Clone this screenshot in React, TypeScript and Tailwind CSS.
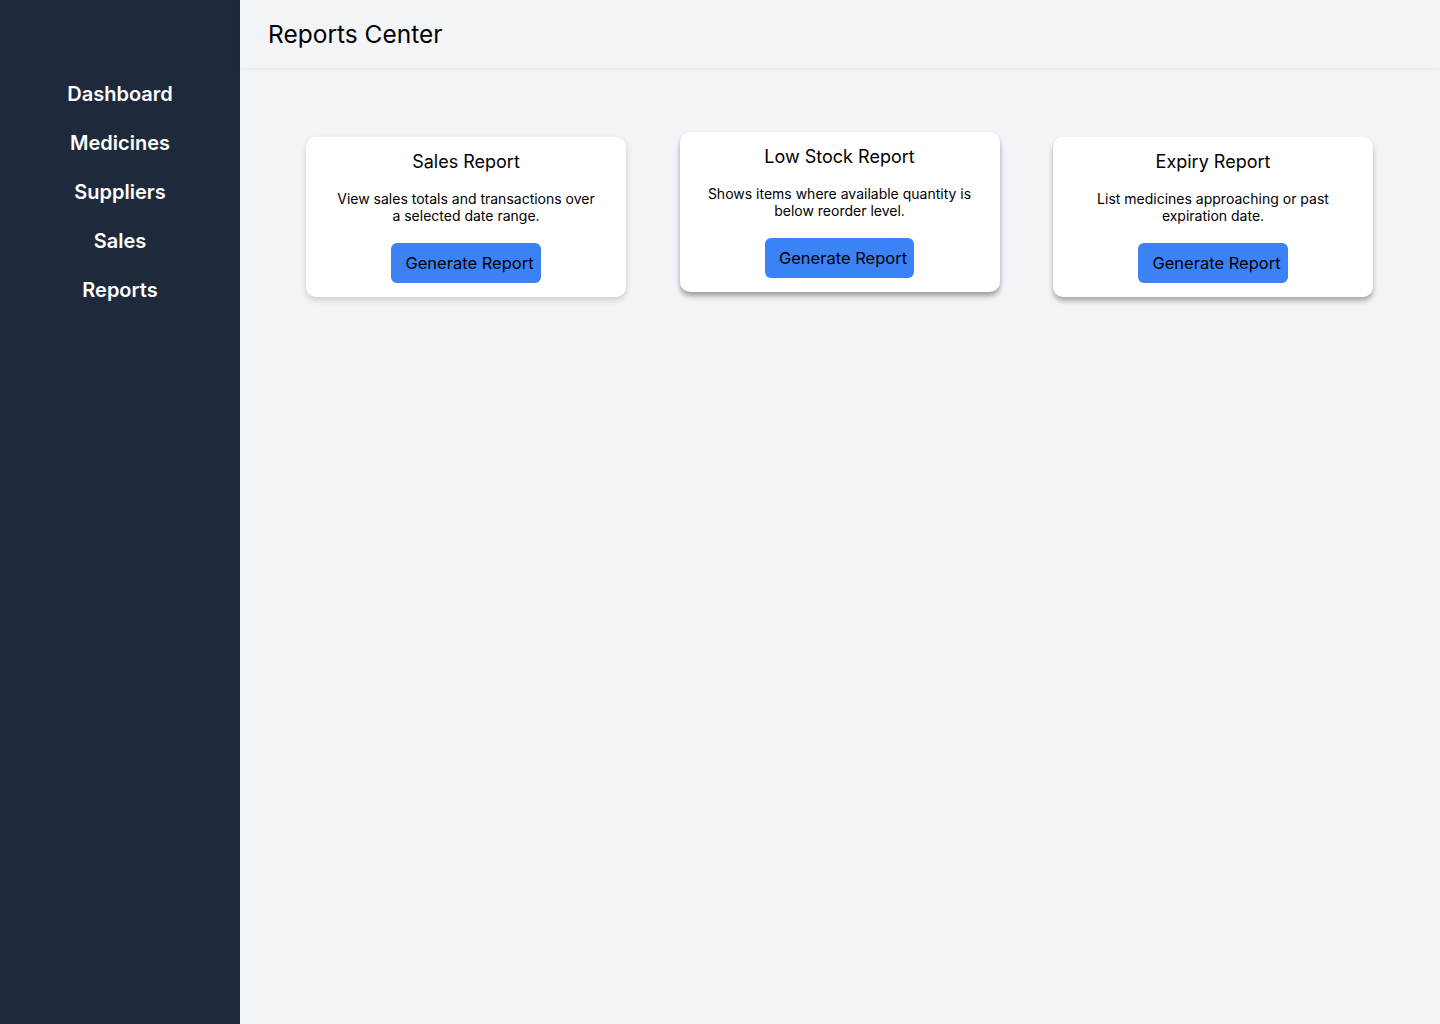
const reports = [
  {
    title: "Sales Report",
    desc: "View sales totals and transactions over a selected date range.",
    lifted: false,
  },
  {
    title: "Low Stock Report",
    desc: "Shows items where available quantity is below reorder level.",
    lifted: true,
  },
  {
    title: "Expiry Report",
    desc: "List medicines approaching or past expiration date.",
    lifted: false,
  },
];

const nav = ["Dashboard", "Medicines", "Suppliers", "Sales", "Reports"];

export default function App() {
  return (
    <div className="flex min-h-[1024px] w-full" style={{ fontFamily: "Inter, 'Noto Sans', sans-serif" }}>
      <aside className="w-[240px] shrink-0 bg-[#1e293b] pt-[79px]">
        <nav className="flex flex-col gap-[19px]">
          {nav.map((n) => (
            <a key={n} className="block text-center text-[20px] leading-[30px] font-semibold text-white">
              {n}
            </a>
          ))}
        </nav>
      </aside>
      <main className="flex-1 bg-[#f3f4f8]">
        <header className="h-[68px] flex items-center px-[28px] bg-[#f3f4f8] shadow-[0_2px_4px_rgba(0,0,0,0.05)]">
          <h1 className="text-[24.5px] leading-[32px] text-black pb-[1px]">Reports Center</h1>
        </header>
        <section className="flex justify-center items-start gap-[53.5px] pt-[69px] pr-[1px]">
          {reports.map((r, i) => (
            <div
              key={r.title}
              className={
                "w-[320px] h-[160px] rounded-[10px] bg-white flex flex-col items-center pt-[13px] px-[20px] " +
                (r.lifted
                  ? "-translate-y-[5px] shadow-[0_4px_5px_rgba(0,0,0,0.35)]"
                  : i === 0
                  ? "shadow-[0_3px_6px_rgba(0,0,0,0.16)]"
                  : "shadow-[0_4px_5px_rgba(0,0,0,0.3)]")
              }
            >
              <h2 className="text-[18px] leading-[24px] text-black">{r.title}</h2>
              <p className="mt-[16px] text-[14px] leading-[17px] text-black text-center max-w-[264px]">{r.desc}</p>
              <button className="mt-[19px] h-[40px] rounded-[6px] bg-[#3b82f6] pl-[14px] pr-[7px] text-[16.5px] text-black">
                Generate Report
              </button>
            </div>
          ))}
        </section>
      </main>
    </div>
  );
}
